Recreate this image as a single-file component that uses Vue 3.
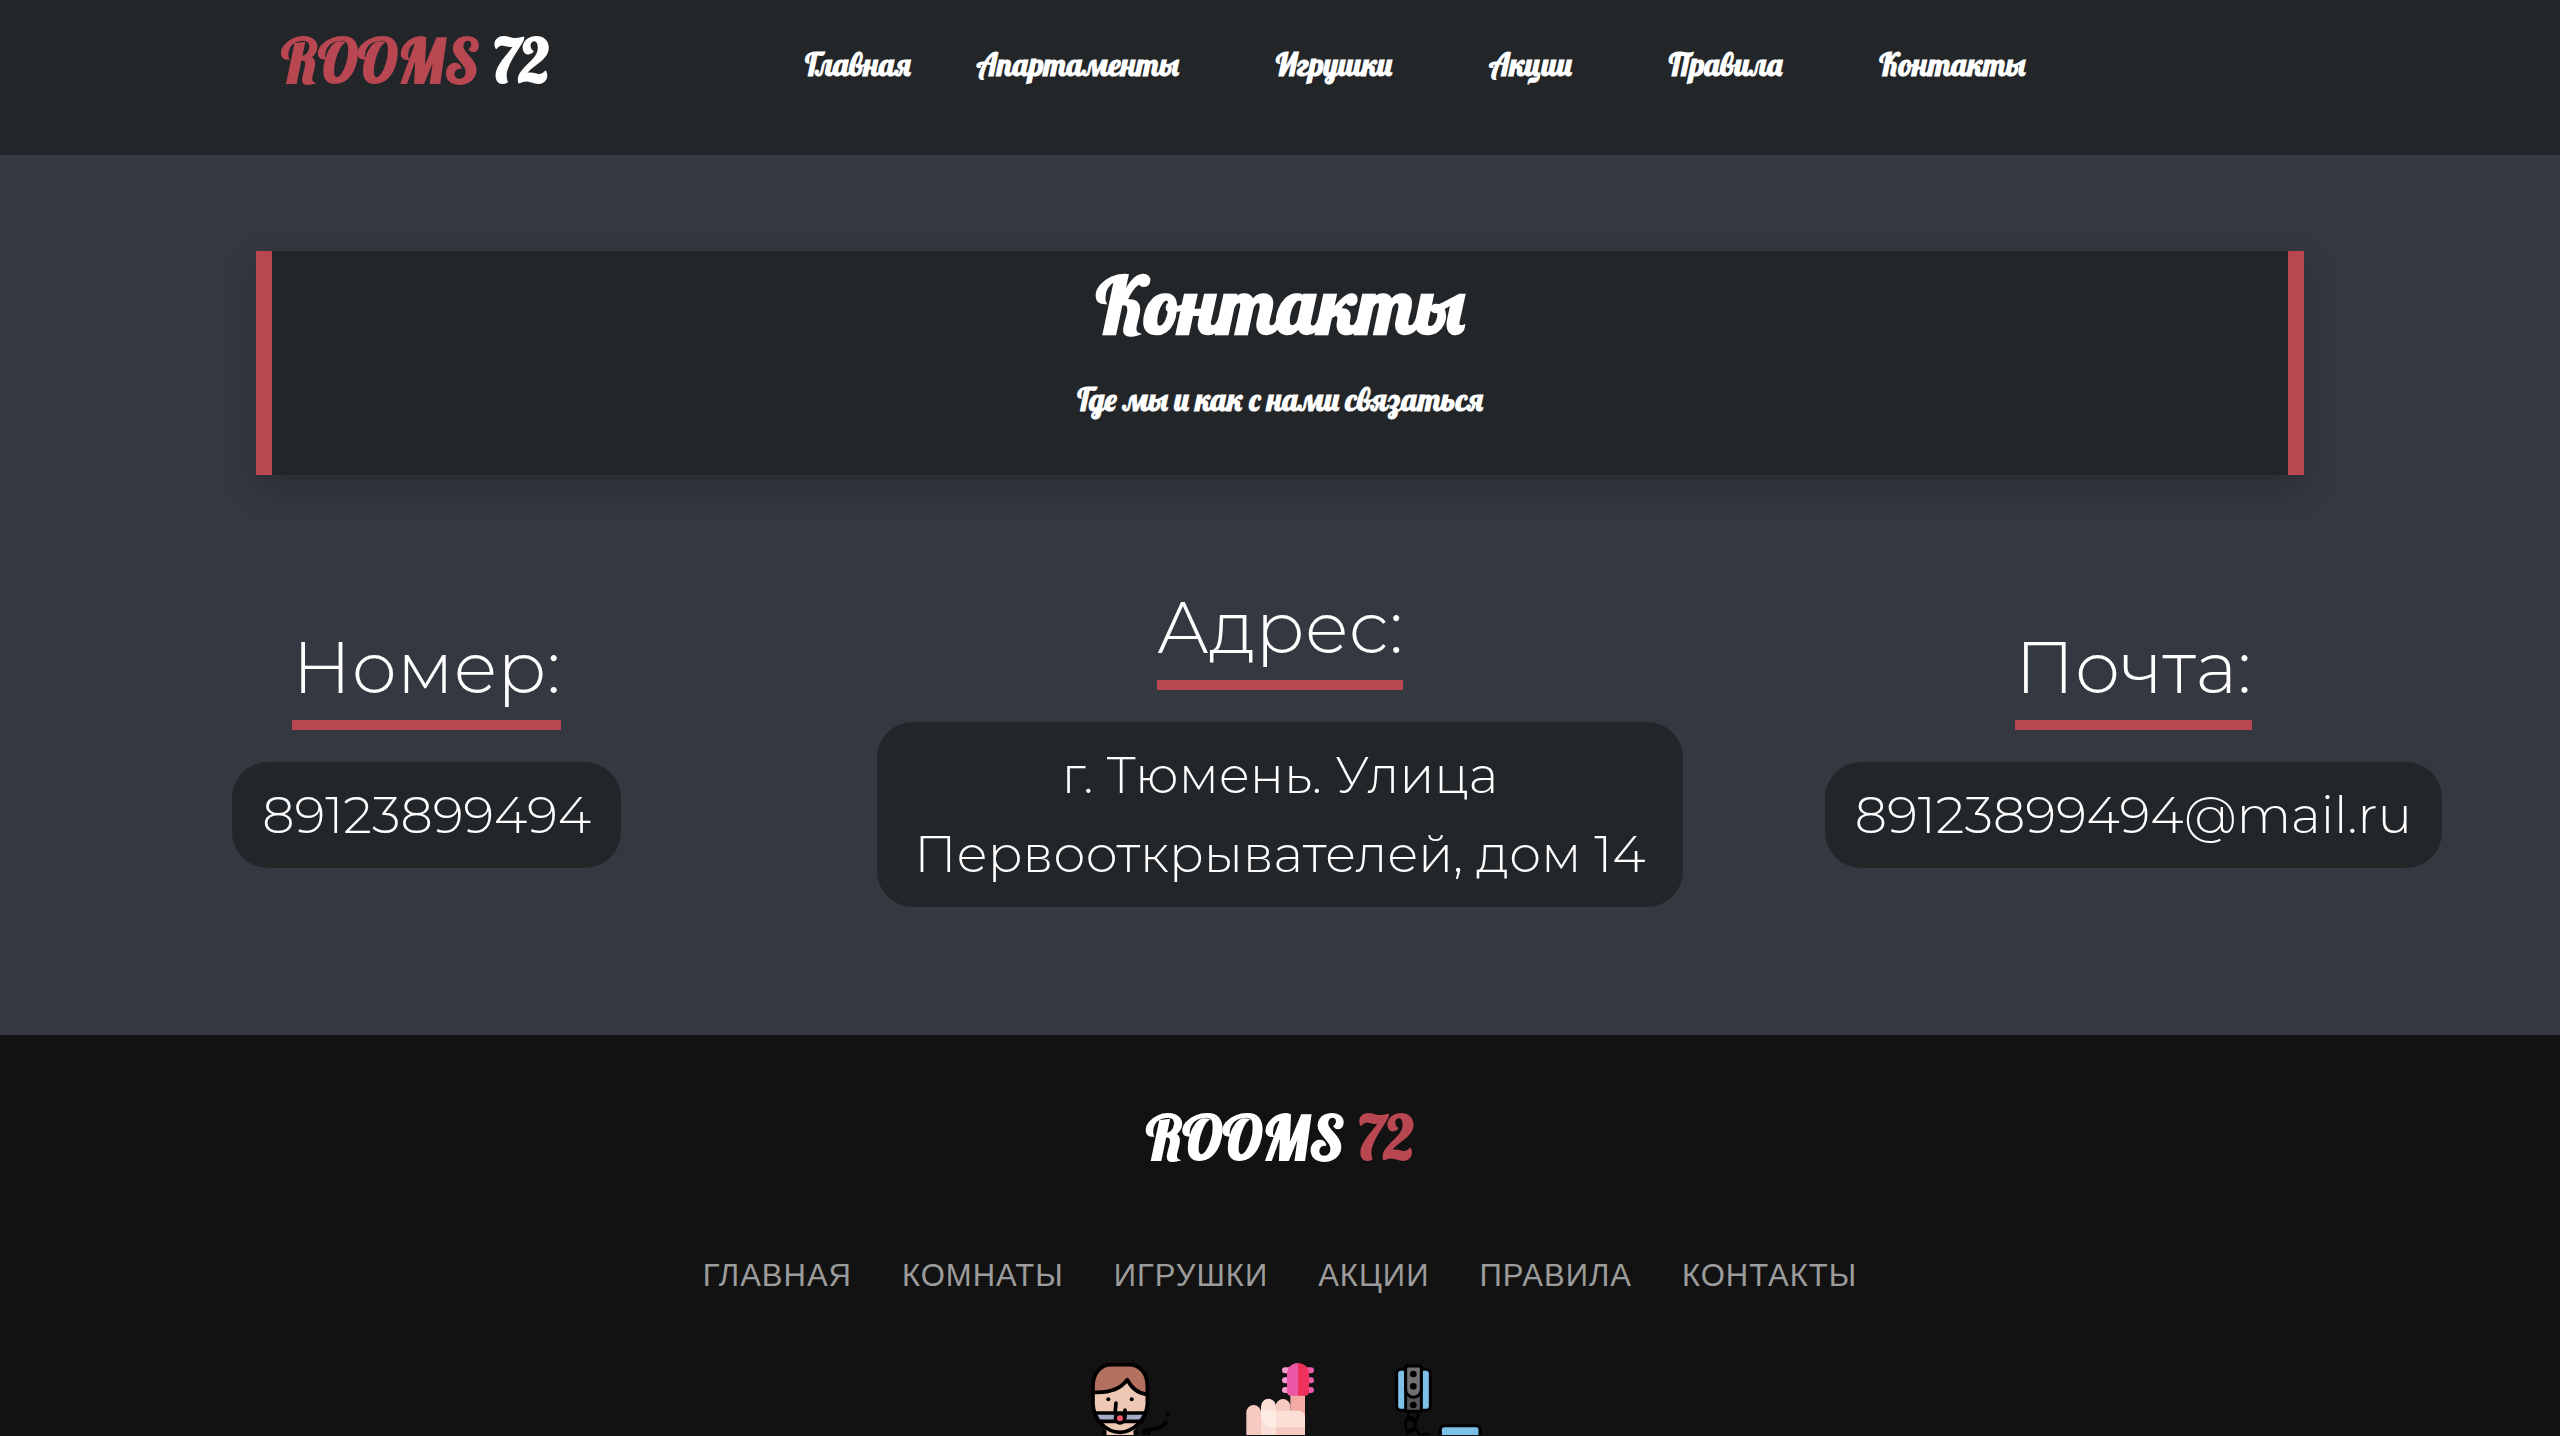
<script setup>
const menu = [
  { text: 'Главная' },
  { text: 'Апартаменты' },
  { text: 'Игрушки', wide: true },
  { text: 'Акции', wide: true },
  { text: 'Правила', wide: true },
  { text: 'Контакты', wide: true },
]

const contacts = [
  { title: 'Номер:', value: '89123899494', href: 'tel:89123899494' },
  { title: 'Адрес:', value: 'г. Тюмень. Улица Первооткрывателей, дом 14' },
  { title: 'Почта:', value: '89123899494@mail.ru', href: 'mailto:89123899494@mail.ru' },
]

const footerMenu = ['Главная', 'Комнаты', 'Игрушки', 'Акции', 'Правила', 'Контакты']
</script>

<template>
  <div class="page">
    <header class="header">
      <a class="logo" href="#"><span class="accent">ROOMS</span> 72</a>
      <nav class="menu" aria-label="Основное меню">
        <a v-for="item in menu" :key="item.text" href="#" :class="{ wide: item.wide }">{{ item.text }}</a>
      </nav>
    </header>

    <main class="main">
      <section class="banner">
        <h1>Контакты</h1>
        <p>Где мы и как с нами связаться</p>
      </section>

      <section class="contacts">
        <div v-for="c in contacts" :key="c.title" class="contact">
          <h2>{{ c.title }}</h2>
          <a v-if="c.href" class="value" :href="c.href">{{ c.value }}</a>
          <p v-else class="value">{{ c.value }}</p>
        </div>
      </section>
    </main>

    <footer class="footer">
      <a class="logo" href="#">ROOMS <span class="accent">72</span></a>
      <nav class="footer-menu" aria-label="Меню в подвале">
        <a v-for="item in footerMenu" :key="item" href="#">{{ item }}</a>
      </nav>
      <div class="icons">
        <svg viewBox="-15 0 390 258" aria-hidden="true">
          <path d="M104 236h92v30h-92z" fill="#eec8b4" />
          <path d="M69 112C69 72 92 47 124 47h52c34 0 56 25 56 65v54c-3 44-42 83-82 84-42-1-79-38-81-84z" fill="#eec8b4" />
          <path d="M70 131v-19c0-40 22-65 54-65h52c34 0 56 25 56 65v24c-24-2-47-14-60-44-20 30-57 41-102 39z" fill="#b3705f" />
          <path d="M78 192h144v26H90z" fill="#a4a9c7" />
          <path d="M134 190h34v36h-34z" fill="#eec8b4" />
          <g fill="none" stroke="#000" stroke-width="11" stroke-linecap="round" stroke-linejoin="round">
            <path d="M69 112C69 72 92 47 124 47h52c34 0 56 25 56 65v54c-3 44-42 83-82 84-42-1-79-38-81-84z" />
            <path d="M72 130c46 2 80-10 100-38 13 27 33 41 58 44M74 192h150M84 217h134M138 162l-3 33M165 183v22" />
            <path d="M104 246v12M196 246v12M222 258v-13c12-8 42 4 66-25M235 243v15" />
          </g>
          <circle cx="115" cy="151" r="6" /><circle cx="185" cy="151" r="6" /><circle cx="293" cy="196" r="6" />
          <circle cx="150" cy="208" r="14" fill="#f2576d" stroke="#000" stroke-width="10" />
        </svg>
        <svg viewBox="-15 0 390 258" aria-hidden="true">
          <path d="M211 130h44v80h-44z" fill="#f3aaa2" />
          <path d="M79 258v-68a22 22 0 0 1 44 0v68z" fill="#f6cac1" />
          <path d="M167 190v-18a22 22 0 0 1 44 0v18z" fill="#f6cac1" />
          <path d="M123 185h110q22 0 22 22v51H123z" fill="#f6cac1" />
          <path d="M123 258v-86a22 22 0 0 1 45 0v86z" fill="#fbdfd6" />
          <path d="M123 185h110q22 0 22 22v28h-92q-40 0-40-50z" fill="#fbdfd6" />
          <path d="M123 185h45v50h-5q-40 0-40-50z" fill="#fdece4" />
          <g fill="#f59bd0"><rect x="186" y="55" width="30" height="18" rx="9" /><rect x="186" y="85" width="30" height="18" rx="9" /><rect x="186" y="114" width="30" height="18" rx="9" /></g>
          <g fill="#eb5ba8"><rect x="252" y="55" width="30" height="18" rx="9" /><rect x="252" y="85" width="30" height="18" rx="9" /><rect x="252" y="114" width="30" height="18" rx="9" /></g>
          <path d="M234 42c-20 0-33 16-33 33v53q0 12 12 12h21z" fill="#eb57a4" />
          <path d="M234 42c20 0 33 16 33 33v53q0 12-12 12h-21z" fill="#ed315c" />
        </svg>
        <svg viewBox="-15 0 390 258" aria-hidden="true">
          <g stroke="#000" stroke-width="9" stroke-linejoin="round">
            <rect x="80" y="61" width="101" height="123" rx="13" fill="#7dc0e8" />
            <path d="M107 58q0-7 7-7h33q7 0 7 7v126q0 3-3 3h-41q-3 0-3-3z" fill="#555" />
            <path d="M107 58q0-7 7-7h33q7 0 7 7v63a23 23 0 0 1-47 0z" fill="#707070" />
            <rect x="211" y="230" width="119" height="50" rx="12" fill="#7dc0e8" />
          </g>
          <circle cx="130" cy="75" r="10" /><circle cx="130" cy="112" r="10" /><circle cx="130" cy="168" r="10" />
          <g fill="none" stroke="#000" stroke-width="8" stroke-linecap="round">
            <path d="M115 188v11q0 15 15 17 14-2 14-17v-11" />
            <rect x="107" y="205" width="29" height="43" rx="14" />
            <path d="M113 262c2-30 30-28 34-5h30" />
          </g>
        </svg>
      </div>
    </footer>
  </div>
</template>

<style>
body {
  margin: 0;
  background: #121212;
}
</style>

<style scoped>
.page {
  --accent: #b84752;
  --dark: #222629;
  --script: Lobster, "Liberation Serif", serif;
  --light: Montserrat, Inter, sans-serif;
  background: #343840;
  color: #fff;
  overflow: hidden;
}

a {
  color: inherit;
  text-decoration: none;
}

h1,
h2,
p {
  margin: 0;
}

.accent {
  color: var(--accent);
}

.logo {
  font: bold 60px/64px var(--script);
  white-space: nowrap;
}

.header {
  box-sizing: border-box;
  min-height: 155px;
  padding: 29px 11% 0;
  display: flex;
  align-items: flex-start;
  background: var(--dark);
}

.menu {
  display: flex;
  gap: 66px;
  margin: 4px 0 0 256px;
  font: bold 31px/64px var(--script);
}

.menu .wide {
  margin-left: 31px;
}

.main {
  padding: 96px 0 128px;
}

.banner {
  box-sizing: border-box;
  width: 80%;
  min-height: 224px;
  margin: 0 auto 115px;
  padding: 4px 24px;
  border: solid var(--accent);
  border-width: 0 16px;
  background: var(--dark);
  box-shadow: 0 14px 32px rgba(0, 0, 0, 0.2);
  text-align: center;
}

.banner h1 {
  font: bold 78px/100px var(--script);
}

.banner p {
  margin-top: 21px;
  font: bold 31px/48px var(--script);
}

.contacts {
  display: grid;
  grid-template-columns: repeat(3, 1fr);
  align-items: center;
}

.contact {
  display: flex;
  flex-direction: column;
  align-items: center;
  padding: 0 24px;
}

.contact h2 {
  border-bottom: 10px solid var(--accent);
  margin-bottom: 32px;
  padding-bottom: 16px;
  font: 300 72px/74px var(--light);
}

.value {
  padding: 14px 30px 13px;
  border-radius: 36px;
  background: var(--dark);
  font: 300 51px/79px var(--light);
  text-align: center;
}

.footer {
  display: flex;
  flex-direction: column;
  align-items: center;
  padding-top: 71px;
  background: #121212;
}

.footer-menu {
  display: flex;
  gap: 50px;
  margin: 86px 0 53px;
  color: #9c9c9c;
  font: 31px/40px "Liberation Sans", Arial, sans-serif;
  letter-spacing: 1px;
  text-transform: uppercase;
}

.icons {
  display: flex;
  gap: 20px;
}

.icons svg {
  display: block;
  width: 130px;
  height: 86px;
}
</style>
